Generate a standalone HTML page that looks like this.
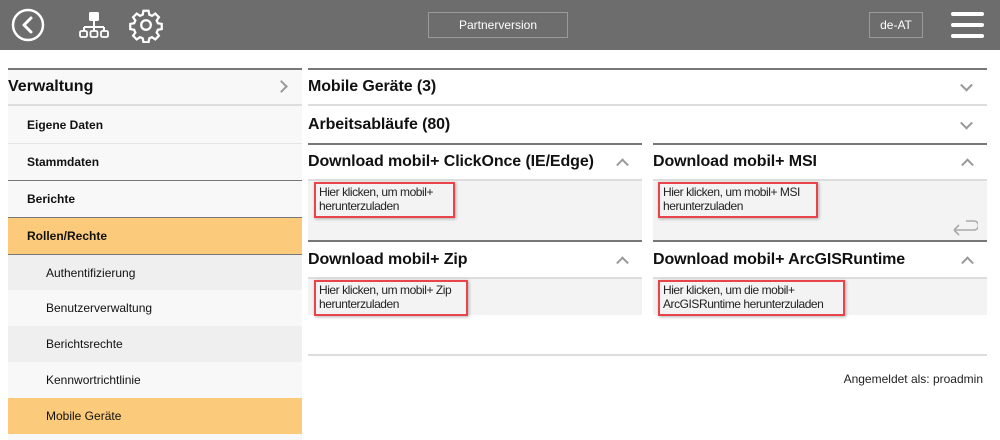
<!DOCTYPE html>
<html><head><meta charset="utf-8"><style>
*{margin:0;padding:0;box-sizing:border-box}
body{width:1000px;height:440px;background:#fff;font-family:"Liberation Sans",sans-serif;position:relative;overflow:hidden;color:#111}
.a{position:absolute}
.hdr{left:0;top:0;width:1000px;height:50px;background:#6d6d6d}
.box{border:1px solid #9a9a9a;color:#fff;font-size:12px;text-align:center;line-height:24px}
.row{position:absolute;left:8px;width:294px;font-size:12px;font-weight:bold;padding-left:19px;display:flex;align-items:center}
.sub{position:absolute;left:8px;width:294px;font-size:12px;padding-left:38px;display:flex;align-items:center}
.ttl{font-size:16px;font-weight:bold;display:flex;align-items:center;padding-left:0;letter-spacing:-0.1px}
.chev{position:absolute;right:12px;top:50%;width:9px;height:9px;border-right:2px solid #999;border-bottom:2px solid #999}
.pbody{background:#f3f3f3}
.link{position:absolute;border:2px solid #e8454a;font-size:12px;line-height:14px;padding:1px 3px;color:#222;box-shadow:1px 1px 3px rgba(0,0,0,.3);letter-spacing:-0.45px;white-space:nowrap}
</style></head><body>
<div class="a hdr"></div>
<svg class="a" style="left:10px;top:8px" width="36" height="34" viewBox="0 0 36 34"><circle cx="18" cy="17" r="15" fill="none" stroke="#fff" stroke-width="2.5"/><path d="M21 10 L14 17 L21 24" fill="none" stroke="#fff" stroke-width="3" stroke-linecap="round" stroke-linejoin="round"/></svg>
<svg class="a" style="left:78px;top:11px" width="32" height="30" viewBox="0 0 32 30"><rect x="11" y="1" width="10" height="9" rx="1.5" fill="#fff"/><path d="M16 10v6M6 16h20M6 16v4M16 16v4M26 16v4" stroke="#fff" stroke-width="2" fill="none"/><rect x="2" y="20" width="7" height="6" rx="1.5" fill="none" stroke="#fff" stroke-width="1.8"/><rect x="12.5" y="20" width="7" height="6" rx="1.5" fill="none" stroke="#fff" stroke-width="1.8"/><rect x="23" y="20" width="7" height="6" rx="1.5" fill="none" stroke="#fff" stroke-width="1.8"/></svg>
<svg class="a" style="left:128px;top:7px" width="36" height="36" viewBox="0 0 24 24"><path fill="none" stroke="#fff" stroke-width="1.5" d="M10.3 2.5h3.4l.5 2.6 1.8.8 2.2-1.5 2.4 2.4-1.5 2.2.8 1.8 2.6.5v3.4l-2.6.5-.8 1.8 1.5 2.2-2.4 2.4-2.2-1.5-1.8.8-.5 2.6h-3.4l-.5-2.6-1.8-.8-2.2 1.5-2.4-2.4 1.5-2.2-.8-1.8-2.6-.5v-3.4l2.6-.5.8-1.8-1.5-2.2 2.4-2.4 2.2 1.5 1.8-.8z"/><circle cx="12" cy="12" r="3.2" fill="none" stroke="#fff" stroke-width="1.5"/></svg>
<div class="a box" style="left:428px;top:12px;width:140px;height:26px">Partnerversion</div>
<div class="a box" style="left:869px;top:12px;width:54px;height:26px">de-AT</div>
<div class="a" style="left:951px;top:12px;width:33px;height:4px;background:#fff;border-radius:2px"></div>
<div class="a" style="left:951px;top:23px;width:33px;height:4px;background:#fff;border-radius:2px"></div>
<div class="a" style="left:951px;top:34px;width:33px;height:4px;background:#fff;border-radius:2px"></div>

<!-- sidebar -->
<div class="row" style="top:68px;height:38px;background:#f8f8f8;border-top:2px solid #777;border-bottom:2px solid #ddd;padding-left:0;font-size:16px">Verwaltung</div>
<div class="a" style="left:277px;top:82px;width:9px;height:9px;border-right:2px solid #999;border-top:2px solid #999;transform:rotate(45deg)"></div>
<div class="row" style="top:106px;height:37px;background:#f8f8f8">Eigene Daten</div>
<div class="row" style="top:143px;height:37px;background:#f8f8f8;border-top:1px solid #e4e4e4">Stammdaten</div>
<div class="row" style="top:180px;height:37px;background:#f8f8f8;border-top:1px solid #777">Berichte</div>
<div class="row" style="top:217px;height:37px;background:#fbcb7b;border-top:1px solid #777">Rollen/Rechte</div>
<div class="sub" style="top:254px;height:36px;background:#efefef;border-top:1px solid #777">Authentifizierung</div>
<div class="sub" style="top:290px;height:36px;background:#f8f8f8">Benutzerverwaltung</div>
<div class="sub" style="top:326px;height:36px;background:#efefef">Berichtsrechte</div>
<div class="sub" style="top:362px;height:36px;background:#f8f8f8">Kennwortrichtlinie</div>
<div class="sub" style="top:398px;height:36px;background:#fbcb7b">Mobile Geräte</div>
<div class="a" style="left:8px;top:434px;width:294px;height:6px;background:#f8f8f8"></div>

<!-- right -->
<div class="a ttl" style="left:308px;top:68px;width:679px;height:38px;border-top:2px solid #777;border-bottom:2px solid #ddd">Mobile Geräte (3)<div class="chev" style="transform:translateY(-70%) rotate(45deg);right:16px"></div></div>
<div class="a ttl" style="left:308px;top:106px;width:679px;height:37px">Arbeitsabläufe (80)<div class="chev" style="transform:translateY(-70%) rotate(45deg);right:16px"></div></div>

<div class="a ttl" style="left:308px;top:143px;width:334px;height:38px;border-top:2px solid #777;border-bottom:2px solid #ddd">Download mobil+ ClickOnce (IE/Edge)<div class="chev" style="transform:translateY(-20%) rotate(-135deg);right:15px"></div></div>
<div class="a pbody" style="left:308px;top:181px;width:334px;height:59px"></div>
<div class="a ttl" style="left:653px;top:143px;width:334px;height:38px;border-top:2px solid #777;border-bottom:2px solid #ddd">Download mobil+ MSI<div class="chev" style="transform:translateY(-20%) rotate(-135deg);right:15px"></div></div>
<div class="a pbody" style="left:653px;top:181px;width:334px;height:59px"></div>
<svg class="a" style="left:952px;top:218px" width="26" height="18" viewBox="0 0 26 18"><path d="M2 12 H22 A3 3 0 0 0 22 3 H14 M2 12 L7 7 M2 12 L7 17" fill="none" stroke="#aaa" stroke-width="1.6"/></svg>

<div class="a ttl" style="left:308px;top:240px;width:334px;height:39px;border-top:2px solid #777;border-bottom:2px solid #ddd">Download mobil+ Zip<div class="chev" style="transform:translateY(-20%) rotate(-135deg);right:15px"></div></div>
<div class="a pbody" style="left:308px;top:279px;width:334px;height:36px"></div>
<div class="a ttl" style="left:653px;top:240px;width:334px;height:39px;border-top:2px solid #777;border-bottom:2px solid #ddd">Download mobil+ ArcGISRuntime<div class="chev" style="transform:translateY(-20%) rotate(-135deg);right:15px"></div></div>
<div class="a pbody" style="left:653px;top:279px;width:334px;height:36px"></div>

<div class="link" style="left:314px;top:182px;width:141px;height:36px">Hier klicken, um mobil+<br>herunterzuladen</div>
<div class="link" style="left:658px;top:182px;width:160px;height:36px">Hier klicken, um mobil+ MSI<br>herunterzuladen</div>
<div class="link" style="left:314px;top:280px;width:154px;height:36px">Hier klicken, um mobil+ Zip<br>herunterzuladen</div>
<div class="link" style="left:658px;top:280px;width:187px;height:36px">Hier klicken, um die mobil+<br>ArcGISRuntime herunterzuladen</div>

<div class="a" style="left:308px;top:354px;width:679px;height:2px;background:#ddd"></div>
<div class="a" style="left:700px;top:372px;width:283px;text-align:right;font-size:12px;color:#222">Angemeldet als: proadmin</div>
</body></html>
